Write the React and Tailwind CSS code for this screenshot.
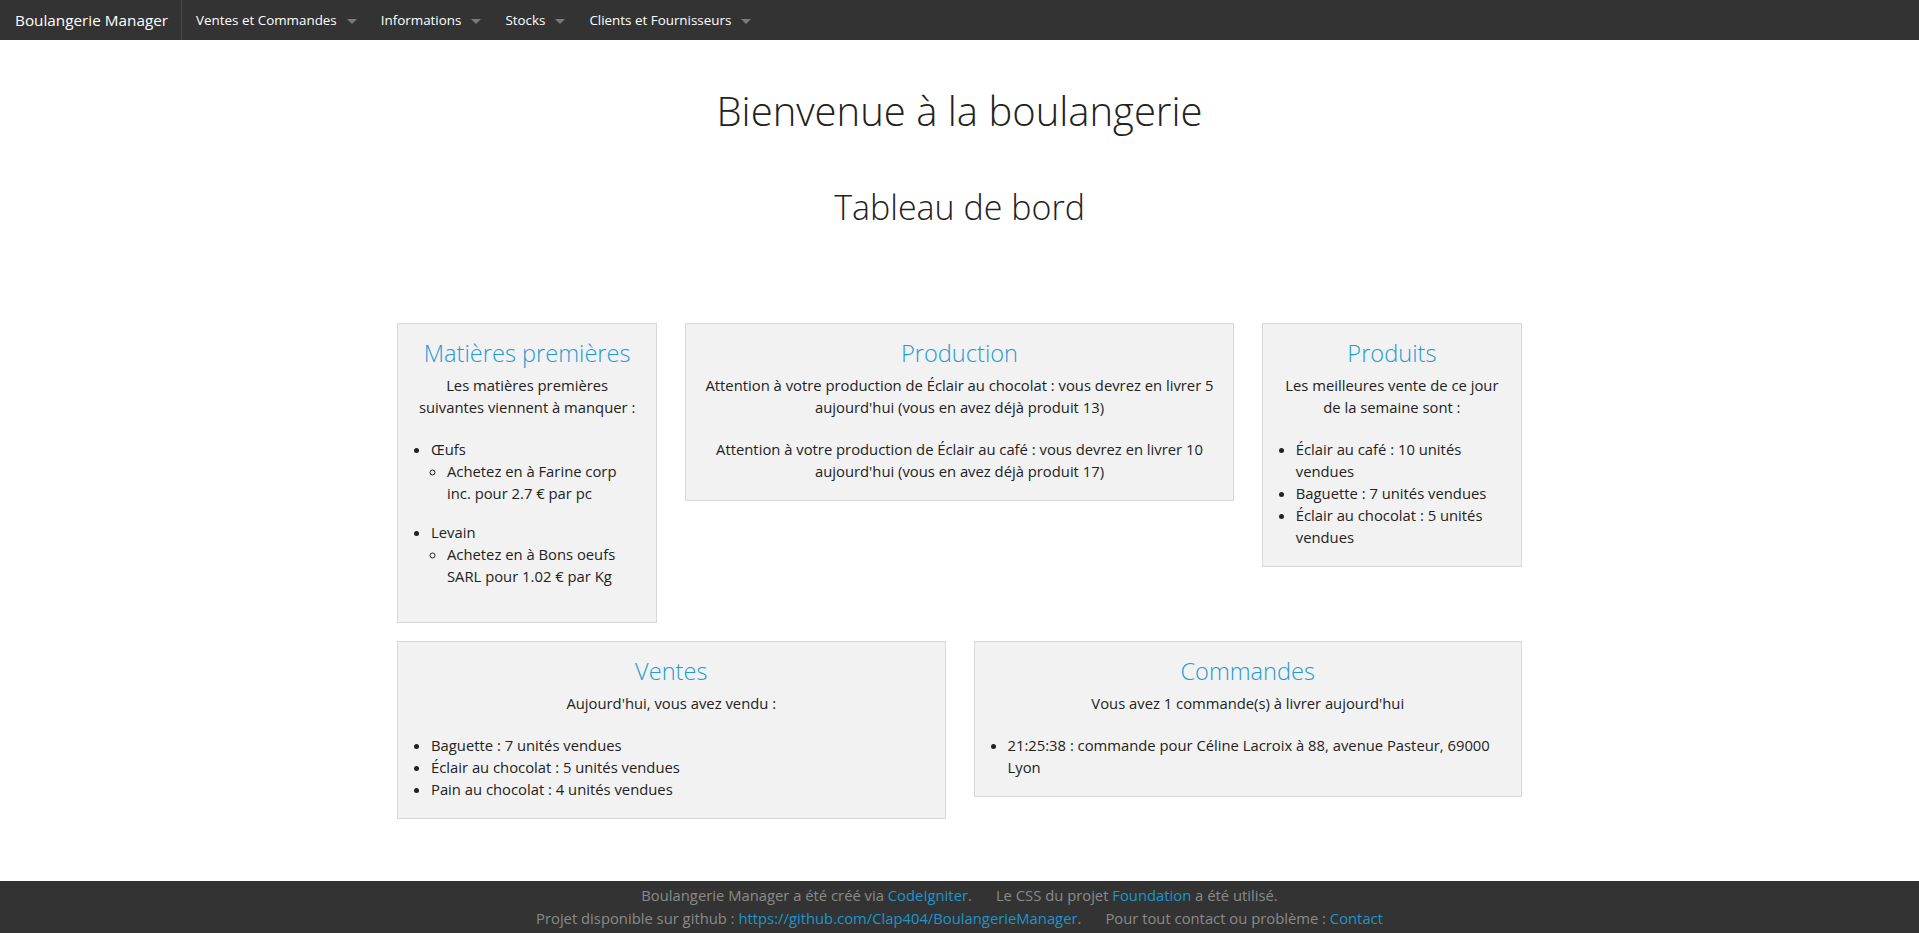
import React from "react";

const NAV = ["Ventes et Commandes", "Informations", "Stocks", "Clients et Fournisseurs"];

function Caret() {
  return (
    <span className="ml-[10px] inline-block w-0 h-0 border-x-[5px] border-x-transparent border-t-[5px] border-t-[#7a7a7a] mt-[2px]" />
  );
}

function TopBar() {
  return (
    <nav className="h-10 shrink-0 bg-[#333333] flex items-stretch text-white font-['Open_Sans',sans-serif]">
      <div className="flex items-center pl-[15px] pr-[13px] border-r border-[#4a4a4a] text-[15.3px]">
        Boulangerie Manager
      </div>
      {NAV.map((label) => (
        <div key={label} className="flex items-center pl-[14px] pr-[10px] text-[13.4px]">
          {label}
          <Caret />
        </div>
      ))}
    </nav>
  );
}

function Card({ title, className = "", children }) {
  return (
    <div className={"bg-[#f2f2f2] border border-[#d8d8d8] px-[15px] pt-[15px] pb-[18px] " + className}>
      <h3 className="text-center text-[23.6px] leading-[1.2] font-light text-[#1f9ad3] font-['Open_Sans',sans-serif] mb-[7px]">
        {title}
      </h3>
      {children}
    </div>
  );
}

function P({ children, last }) {
  return <p className={last ? "text-center" : "text-center mb-[20px]"}>{children}</p>;
}

function UL({ children }) {
  return <ul className="list-disc pl-[18px]">{children}</ul>;
}

function Sub({ children }) {
  return <ul className="list-[circle] pl-4 mb-[17px]">{children}</ul>;
}

function Link({ children }) {
  return <a className="text-[#1a96cc]">{children}</a>;
}

export default function App() {
  return (
    <div className="min-h-screen flex flex-col bg-white text-[#222222]">
      <TopBar />
      <main className="flex-1 font-['Open_Sans',sans-serif] text-[14.8px] leading-[22px]">
        <h1 className="text-center font-light text-[40px] leading-[1.2] mt-[47px]">Bienvenue à la boulangerie</h1>
        <h2 className="text-center font-light text-[34px] leading-[1.2] mt-[52px]">Tableau de bord</h2>

        <div className="w-[1125px] mx-auto mt-[95px] grid grid-cols-4 gap-x-[28px] gap-y-[18px] items-start">
          <Card title="Matières premières">
            <P>Les matières premières suivantes viennent à manquer :</P>
            <UL>
              <li>
                Œufs
                <Sub>
                  <li>Achetez en à Farine corp inc. pour 2.7 € par pc</li>
                </Sub>
              </li>
              <li>
                Levain
                <Sub>
                  <li>Achetez en à Bons oeufs SARL pour 1.02 € par Kg</li>
                </Sub>
              </li>
            </UL>
          </Card>

          <Card title="Production" className="col-span-2">
            <P>Attention à votre production de Éclair au chocolat : vous devrez en livrer 5 aujourd'hui (vous en avez déjà produit 13)</P>
            <P last>Attention à votre production de Éclair au café : vous devrez en livrer 10 aujourd'hui (vous en avez déjà produit 17)</P>
          </Card>

          <Card title="Produits">
            <P>Les meilleures vente de ce jour de la semaine sont :</P>
            <UL>
              <li>Éclair au café : 10 unités vendues</li>
              <li>Baguette : 7 unités vendues</li>
              <li>Éclair au chocolat : 5 unités vendues</li>
            </UL>
          </Card>

          <Card title="Ventes" className="col-span-2">
            <P>Aujourd'hui, vous avez vendu :</P>
            <UL>
              <li>Baguette : 7 unités vendues</li>
              <li>Éclair au chocolat : 5 unités vendues</li>
              <li>Pain au chocolat : 4 unités vendues</li>
            </UL>
          </Card>

          <Card title="Commandes" className="col-span-2">
            <P>Vous avez 1 commande(s) à livrer aujourd'hui</P>
            <UL>
              <li>21:25:38 : commande pour Céline Lacroix à 88, avenue Pasteur, 69000 Lyon</li>
            </UL>
          </Card>
        </div>
      </main>

      <footer className="h-[52px] shrink-0 bg-[#333333] flex flex-col items-center justify-center text-[#8a8a8a] text-[14.8px] leading-[23px] font-['Open_Sans',sans-serif]">
        <div>
          Boulangerie Manager a été créé via <Link>CodeIgniter</Link>.
          <span className="ml-[24px]">Le CSS du projet <Link>Foundation</Link> a été utilisé.</span>
        </div>
        <div>
          Projet disponible sur github : <Link>https://github.com/Clap404/BoulangerieManager</Link>.
          <span className="ml-[24px]">Pour tout contact ou problème : <Link>Contact</Link></span>
        </div>
      </footer>
    </div>
  );
}
